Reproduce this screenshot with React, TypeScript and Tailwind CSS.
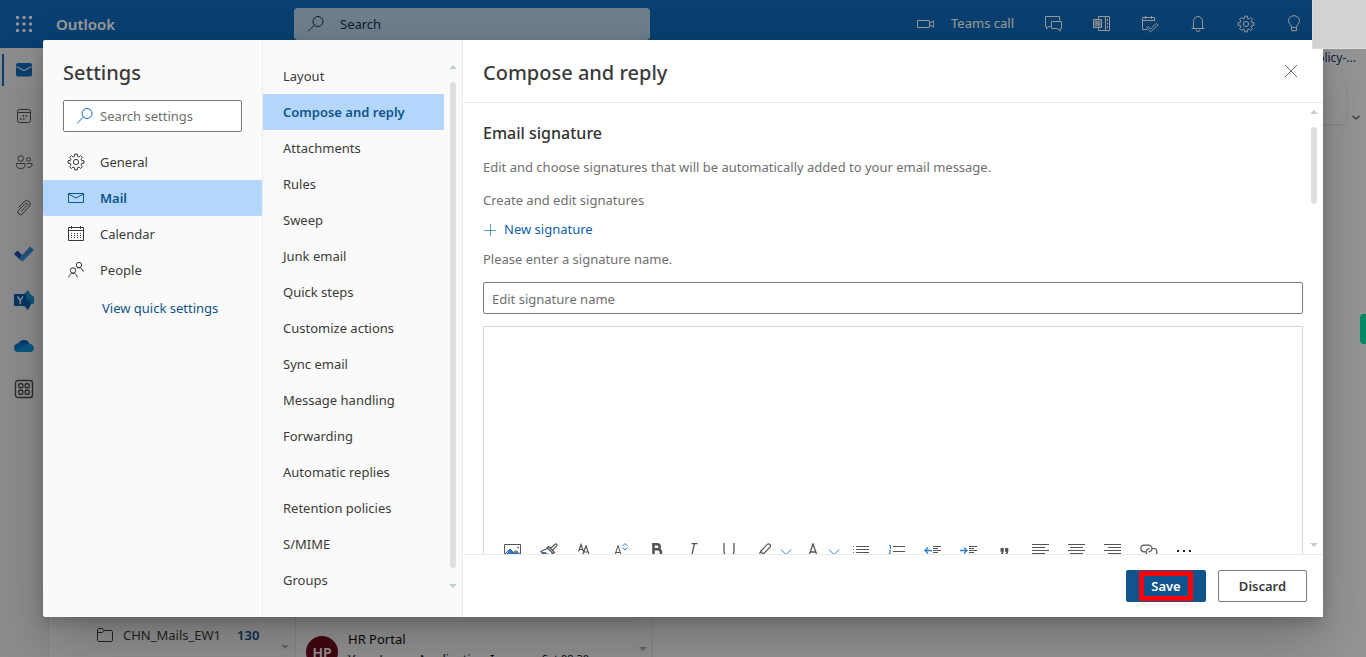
import type { ReactNode } from 'react';

type IconProps = { className?: string };

function Svg({ size = 18, box = 18, className = '', children }: { size?: number; box?: number; className?: string; children: ReactNode }) {
  return (
    <svg
      width={size}
      height={size}
      viewBox={`0 0 ${box} ${box}`}
      fill="none"
      stroke="currentColor"
      strokeWidth="1"
      className={`shrink-0 ${className}`}
      aria-hidden="true"
    >
      {children}
    </svg>
  );
}

const Search = ({ className }: IconProps) => (
  <Svg className={className}>
    <circle cx="11" cy="6.5" r="5" />
    <path d="M7.4 10.1 1.2 16.3" />
  </Svg>
);

const Waffle = () => (
  <Svg>
    <g fill="currentColor" stroke="none">
      {[1, 7.5, 14].map((y) => [1, 7.5, 14].map((x) => <rect key={`${x}-${y}`} x={x} y={y} width="3" height="3" rx="1" />))}
    </g>
  </Svg>
);

const gearPath = (() => {
  const points: string[] = [];
  for (let tooth = 0; tooth < 8; tooth += 1) {
    const steps: [number, number][] = [
      [-13, 5.9],
      [-10, 8],
      [10, 8],
      [13, 5.9],
    ];
    for (const [offset, radius] of steps) {
      const angle = ((tooth * 45 + offset) * Math.PI) / 180;
      points.push(`${(9 + radius * Math.sin(angle)).toFixed(2)} ${(9 - radius * Math.cos(angle)).toFixed(2)}`);
    }
  }
  return `M${points.join('L')}Z`;
})();

const Gear = ({ className }: IconProps) => (
  <Svg className={className}>
    <path strokeLinejoin="round" d={gearPath} />
    <circle cx="9" cy="9" r="2.6" />
  </Svg>
);

const Envelope = () => (
  <Svg>
    <path d="M1.500 4.500h15v9h-15zM1.500 5l7.500 4 7.500-4" />
  </Svg>
);

const CalendarGrid = () => (
  <Svg>
    <path d="M1.500 2.500h15v13h-15zM1.500 5.500h15M4.500 1v3M13.500 1v3" />
    <path strokeDasharray="1 2" d="M4 8.500h11M4 10.500h11M4 12.500h11" />
  </Svg>
);

const People = () => (
  <Svg>
    <circle cx="12" cy="4" r="2.700" />
    <circle cx="6" cy="9.500" r="2.700" />
    <path d="M1.800 16.200c.3-2.400 2-4 4.200-4s3.900 1.600 4.200 4M9.800 7.300c.6-.4 1.300-.6 2.200-.6 2.200 0 3.900 1.600 4.200 4" />
  </Svg>
);

const Video = () => (
  <Svg>
    <path d="M.5 5.500h12v7H.5zM12.500 8l4-2v6l-4-2" />
  </Svg>
);

const Chat = () => (
  <Svg>
    <path d="M5.500 11.500H4l-2.500 2.300v-2.300H.500v-10h14v4M6.500 6.500h10v7h-1.200v2.600l-3-2.600H6.500z" />
  </Svg>
);

const NoteBook = () => (
  <Svg>
    <path d="M5.500 4V1.500h11v14h-11V13M12.500 1.500v14M14.500 4v2M14.500 7.500v2M14.500 11v2" />
    <path fill="currentColor" fillOpacity=".4" d="M.500 4.500h8v8h-8z" />
    <path d="M3 11V6l3 5V6" />
  </Svg>
);

const CalendarCheck = () => (
  <Svg>
    <path d="M6 14.500H1.500v-12h12v3.500M1.500 5.500h12M4.500 1v3M10.500 1v3M7.200 11.500l2.500 2.500 5.600-5.600 1.700 1.700-7.300 6.600-4-3.700z" />
  </Svg>
);

const Bell = () => (
  <Svg>
    <path d="M2.500 13.500h13M4.500 13.500v-7a4.500 5 0 0 1 9 0v7M7 14.500a2 2 0 0 0 4 0" />
  </Svg>
);

const Bulb = () => (
  <Svg>
    <path d="M6.500 12.500c0-2.500-3-3.800-3-6.800a5.500 5 0 0 1 11 0c0 3-3 4.300-3 6.800zM6.500 12.500v3.200h5v-3.200" />
  </Svg>
);

const MailSolid = () => (
  <Svg className="text-[#0f6cbd]">
    <rect x="1" y="2" width="16" height="13.500" rx="2" fill="currentColor" stroke="none" />
    <path stroke="#dcdcdc" strokeWidth="1.200" d="M1.500 5.500 9 9.500l7.500-4" />
  </Svg>
);

const RailCalendar = () => (
  <Svg>
    <rect x="2.500" y="2.500" width="13" height="13" rx="2" />
    <path d="M2.500 5.500h13" />
    <path strokeWidth="1.600" strokeDasharray="1.600 1.400" d="M7.500 9h6M5 12h6" />
  </Svg>
);

const RailPeople = () => (
  <Svg>
    <circle cx="5.800" cy="5.500" r="2.800" />
    <circle cx="13.500" cy="6.500" r="1.900" />
    <path d="M1.500 10.500h8.600v2c0 1.800-1.600 3-4.300 3s-4.300-1.200-4.300-3zM12 10.500h5v1.600c0 1.600-1.500 2.400-4.500 2.200" />
  </Svg>
);

const Clip = () => (
  <Svg>
    <path d="M3.500 8.500 9.300 2.600a3.400 3.400 0 0 1 4.900 4.800L7.500 14.900a2.600 2.600 0 0 1-3.800-3.600l6.300-6.600a1.300 1.300 0 0 1 1.900 1.800L6.500 12" />
  </Svg>
);

const ToDo = () => (
  <Svg size={20} box={20}>
    <g stroke="none">
      <path fill="#1b4ab0" d="M0 10 3.500 6.500l6.200 6.200-3 3.800z" />
      <path fill="#3a8fd4" d="m5 14.500 11-12 4 3.500L8.500 17.500z" />
    </g>
  </Svg>
);

const Yammer = () => (
  <Svg size={20} box={20}>
    <g stroke="none">
      <path fill="#1c92cf" d="M9 5 14 0l3 5 3 1.500v7l-3 .5-3 6-5-5z" />
      <path fill="#0b5da8" d="m10 14 5-5 2 5-3 6z" />
      <rect y="4" width="12.500" height="12" rx="1" fill="#0057a8" />
    </g>
    <path stroke="#e8eef4" strokeWidth="1.500" d="m3.500 6.500 2.700 4 2.700-4M6.200 10.200v4" />
  </Svg>
);

const Cloud = () => (
  <Svg size={20} box={20}>
    <g stroke="none">
      <path fill="#0364b8" d="M4 8.500a6.200 6.200 0 0 1 11.500-1L9 13.500z" />
      <path fill="#0a76cc" d="M4.500 7.300C1.500 7.500 0 9.500 0 11.700 0 14.100 1.900 16 4.300 16L14 9C11 7 8 6.500 4.500 7.300z" />
      <path fill="#1793d6" d="M13 7.800c4-.8 7 1.600 7 4.500 0 2-1.600 3.700-3.700 3.700H4.300c-1.500 0-2.700-.7-3.500-1.800z" />
    </g>
  </Svg>
);

const Apps = () => (
  <Svg size={20} box={20} className="text-[#4a4a4a]">
    <g strokeWidth="1.400">
      <rect x="1.500" y="1.500" width="17" height="17" rx="2.500" />
      <rect x="4.800" y="4.800" width="4" height="4" rx="1" />
      <rect x="11.200" y="4.800" width="4" height="4" rx="1" />
      <rect x="4.800" y="11.200" width="4" height="4" rx="1" />
      <rect x="11.200" y="11.200" width="4" height="4" rx="1" />
    </g>
  </Svg>
);

const Folder = () => (
  <Svg>
    <path d="M1.500 4c0-1 .6-1.500 1.500-1.500h3.500L8 4.500h7c1 0 1.500.6 1.500 1.500v8c0 1-.6 1.500-1.500 1.500H3c-1 0-1.500-.6-1.500-1.500zM1.500 6.500h4.800L8 4.500" />
  </Svg>
);

const Chevron = () => (
  <Svg size={12} box={12} className="text-[#2b7cd3]">
    <path d="m.800 3.500 5.200 5 5.200-5" />
  </Svg>
);

function Rows({ rows, children }: { rows: [number, number, number][]; children?: ReactNode }) {
  return (
    <Svg>
      {rows.map(([x, y, w]) => (
        <rect key={y} x={x} y={y} width={w} height="1" fill="currentColor" stroke="none" />
      ))}
      {children}
    </Svg>
  );
}

const tools: { label: string; icon: ReactNode; menu?: boolean }[] = [
  {
    label: 'Insert picture',
    icon: (
      <Svg>
        <path fill="#2b7cd3" stroke="none" d="M1 13 6 6l4 4 2-2 5 5v2H1z" />
        <path d="M.500 1.500h16v13H.500zM1 11l5-5 6 6M9.500 9.500l2.500-2 4.500 4" />
        <circle cx="14" cy="4.500" r=".5" />
      </Svg>
    ),
  },
  {
    label: 'Format painter',
    icon: (
      <Svg>
        <path fill="#2b7cd3" stroke="none" d="m2 8.500 7 2.500-2 4-5-3z" />
        <path d="M10.800 5.200 15 1.200c1-.9 2.600.6 1.700 1.600l-4 4.200M8.500 3.500l6 6-1.500 1L7 4.800zM7 5.500.800 8.500 8 16l4-5.500M3 10.500l3-1" strokeWidth="1.200" />
      </Svg>
    ),
  },
  {
    label: 'Font',
    icon: (
      <Svg>
        <path d="m2.500 8.500 2.500-7 2.500 7M3.400 6.500h3.200M6.500 12.500l3.500-9.500 3.500 9.500M7.800 9h4.400" strokeWidth="1.200" />
      </Svg>
    ),
  },
  {
    label: 'Font size',
    icon: (
      <Svg>
        <path d="m2.500 13.500 3.500-11 3.500 11M3.800 9.500h4.400" />
        <path stroke="#2b7cd3" d="m10.500 3 2.500-2.500L15.500 3M10.500 4.500 13 7l2.500-2.500" />
      </Svg>
    ),
  },
  {
    label: 'Bold',
    icon: (
      <Svg>
        <path strokeWidth="2.600" d="M5.500 1.300v11.400M4 1.300h5.200a2.500 2.500 0 0 1 0 5H5.500h4.300a3 3 0 0 1 0 6.400H4" />
      </Svg>
    ),
  },
  { label: 'Italic', icon: <Svg><path strokeWidth="1.300" d="M7.500.700h6M5 13.500h5M10.500.700l-3 12.800" /></Svg> },
  { label: 'Underline', icon: <Svg><path strokeWidth="1.300" d="M4 0v8.500a5 5 0 0 0 10 0V0M3 15.500h12" /></Svg> },
  {
    label: 'Highlight',
    menu: true,
    icon: (
      <Svg>
        <path strokeWidth="1.200" d="M4.500 8.500 11.500 1.200c1.500-1 4 .8 2.700 2.800L7.500 11l-4.500 2zM4.500 8.500l3 2.500" />
      </Svg>
    ),
  },
  { label: 'Font color', menu: true, icon: <Svg><path strokeWidth="1.300" d="m5 12.500 4-11.500 4 11.500M6.400 9h5.200" /></Svg> },
  {
    label: 'Bullets',
    icon: (
      <Rows rows={[[4, 3, 13], [4, 6, 13], [4, 9, 13], [4, 12, 13]]}>
        <path stroke="#2b7cd3" d="M1 3.500h1M1 6.500h1M1 9.500h1M1 12.500h1" />
      </Rows>
    ),
  },
  {
    label: 'Numbering',
    icon: (
      <Rows rows={[[5, 3, 12], [5, 8, 12], [5, 13, 12]]}>
        <path stroke="#2b7cd3" d="M1 2.500h1.500V6M1 7.500h1.500L1 11h2" />
      </Rows>
    ),
  },
  {
    label: 'Decrease indent',
    icon: (
      <Rows rows={[[9, 3, 8], [9, 5, 5], [9, 7, 8], [9, 9, 5], [9, 12, 8]]}>
        <path stroke="#2b7cd3" strokeWidth="1.300" d="M8 7.500H1M4 4.500l-3 3 3 3" />
      </Rows>
    ),
  },
  {
    label: 'Increase indent',
    icon: (
      <Rows rows={[[9, 3, 8], [9, 5, 5], [9, 7, 8], [9, 9, 5], [9, 12, 8]]}>
        <path stroke="#2b7cd3" strokeWidth="1.300" d="M0 7.500h7M4 4.500l3 3-3 3" />
      </Rows>
    ),
  },
  {
    label: 'Quote',
    icon: (
      <Svg>
        <path fill="currentColor" stroke="none" d="M4.500 5h3.300v3.500L6.500 12H4.800l.9-3.200H4.500zM9 5h3.300v3.500L11 12H9.300l.9-3.200H9z" />
      </Svg>
    ),
  },
  { label: 'Align left', icon: <Rows rows={[[0, 1, 17], [0, 4, 13], [0, 7, 17], [0, 10, 13]]} /> },
  { label: 'Align center', icon: <Rows rows={[[0, 1, 17], [2, 4, 13], [0, 7, 17], [2, 10, 13]]} /> },
  { label: 'Align right', icon: <Rows rows={[[0, 1, 17], [4, 4, 13], [0, 7, 17], [4, 10, 13]]} /> },
  {
    label: 'Insert link',
    icon: (
      <Svg>
        <path
          d="M5.500 8.800H4.200a3.300 3.300 0 0 1 0-6.600h4.600a3.300 3.300 0 0 1 2 5.800L8.500 9.300M12.500 5.500h1a3.300 3.300 0 0 1 0 6.800H9.200a3.300 3.300 0 0 1-2.400-5.400c.8-1 2-1.300 3-1"
          strokeWidth="1.200"
        />
      </Svg>
    ),
  },
  {
    label: 'More options',
    icon: (
      <Svg className="text-[#222]">
        <path strokeWidth="2" d="M1 8h2M7 8h2M13 8h2" />
      </Svg>
    ),
  },
];

const Triangle = ({ down = false, className = 'text-[#c3ccd1]' }: { down?: boolean; className?: string }) => (
  <svg width="8" height="4" viewBox="0 0 8 4" className={`shrink-0 ${className}`} fill="currentColor" aria-hidden="true">
    <path d={down ? 'M0 0h8L4 4z' : 'M0 4h8L4 0z'} />
  </svg>
);

const sections = [
  { label: 'General', icon: <Gear /> },
  { label: 'Mail', icon: <Envelope />, active: true },
  { label: 'Calendar', icon: <CalendarGrid /> },
  { label: 'People', icon: <People /> },
];

const pages = [
  'Layout',
  'Compose and reply',
  'Attachments',
  'Rules',
  'Sweep',
  'Junk email',
  'Quick steps',
  'Customize actions',
  'Sync email',
  'Message handling',
  'Forwarding',
  'Automatic replies',
  'Retention policies',
  'S/MIME',
  'Groups',
];

const headerActions = [
  { label: 'Chat', icon: <Chat /> },
  { label: 'Notes', icon: <NoteBook /> },
  { label: 'My day', icon: <CalendarCheck /> },
  { label: 'Notifications', icon: <Bell /> },
  { label: 'Settings', icon: <Gear /> },
  { label: 'Tips', icon: <Bulb /> },
];

const railItems = [
  { label: 'Mail', icon: <MailSolid />, active: true },
  { label: 'Calendar', icon: <RailCalendar /> },
  { label: 'People', icon: <RailPeople /> },
  { label: 'Files', icon: <Clip /> },
  { label: 'To Do', icon: <ToDo /> },
  { label: 'Yammer', icon: <Yammer /> },
  { label: 'OneDrive', icon: <Cloud /> },
];

function Header() {
  return (
    <header className="flex h-12 shrink-0 items-center bg-[#0f6cbd] text-white">
      <button aria-label="App launcher" className="flex h-12 w-12 items-center justify-center">
        <Waffle />
      </button>
      <span className="w-[246px] pl-2 text-[15px] font-semibold">Outlook</span>
      <label className="flex h-8 w-[356px] items-center gap-[15px] rounded bg-[#b9d3ea] px-[13px] text-[#15324c]">
        <Search />
        <input aria-label="Search" placeholder="Search" className="w-full bg-transparent pt-px outline-none placeholder:text-[#15324c]" />
      </label>
      <div className="ml-auto flex items-center">
        <button className="flex h-12 items-center gap-4 pr-4">
          <Video />
          Teams call
        </button>
        {headerActions.map((a) => (
          <button key={a.label} aria-label={a.label} className="flex h-12 w-12 items-center justify-center">
            {a.icon}
          </button>
        ))}
        <div className="w-12" />
      </div>
    </header>
  );
}

function Rail() {
  return (
    <nav aria-label="Apps" className="flex w-12 shrink-0 flex-col bg-[#ebebeb] text-[#555]">
      {railItems.map((r) => (
        <a key={r.label} href="#" aria-label={r.label} className="flex h-[46px] items-center pb-[2px]">
          <span className={r.active ? 'ml-[2px] h-8 w-[2px] bg-[#0f6cbd]' : 'ml-[2px] w-[2px]'} />
          <span className="flex w-10 justify-center">{r.icon}</span>
        </a>
      ))}
      <a href="#" aria-label="More apps" className="flex h-10 items-center justify-center pb-[2px]">
        <Apps />
      </a>
    </nav>
  );
}

function MailApp() {
  return (
    <div className="flex h-full flex-col bg-[#f5f5f5]">
      <Header />
      <div className="flex min-h-0 flex-1">
        <Rail />
        <div className="flex w-[248px] shrink-0 items-end border-x border-[#e2e2e2] bg-[#f3f3f3] pb-2">
          <div className="flex w-full items-center pb-1 pl-[47px] text-[#3c3c3c]">
            <Folder />
            <span className="ml-[9px]">CHN_Mails_EW1</span>
            <span className="ml-4 font-semibold text-[#0f548c]">130</span>
          </div>
          <Triangle down className="mr-[6px] text-[#a8b0b3]" />
        </div>
        <div className="flex w-[357px] shrink-0 items-end overflow-hidden border-r border-[#e2e2e2]">
          <div className="flex h-9 flex-1 gap-[10px] border-t border-[#e2e2e2] pl-[10px]">
            <span className="mt-[14px] flex size-8 shrink-0 items-center justify-center rounded-full bg-[#6e0a1e] text-[14px] font-semibold text-white">
              HP
            </span>
            <div className="min-w-0 flex-1 pt-[7px] text-[#111]">
              <p className="leading-5">HR Portal</p>
              <p className="flex leading-5">
                <span className="w-[194px]">Your Leave Application Is</span>
                <span className="text-[11px]">Sat 08:30</span>
              </p>
            </div>
          </div>
          <Triangle down className="mx-[5px] mb-[6px] text-[#a8b0b3]" />
        </div>
        <div className="flex flex-1 flex-col items-end bg-[#f8f8f8]">
          <p className="pr-[10px] text-[12px] leading-5 text-[#123a60]">Leave Policy-...</p>
          <div className="mt-4 flex items-end gap-1 pr-1 text-[#555]">
            <span className="h-10 w-20 rounded bg-[#f9f9f9] shadow" />
            <Svg size={12} box={12}>
              <path strokeWidth="1.200" d="m2.500 4 3.500 3 3.500-3" />
            </Svg>
          </div>
        </div>
      </div>
    </div>
  );
}

function SettingsNav() {
  return (
    <nav aria-label="Settings" className="w-[220px] shrink-0 border-r border-[#ebebeb] pt-[18px]">
      <h1 className="px-5 pt-px text-[20px] leading-7 font-medium">Settings</h1>
      <label className="mx-5 mt-[13px] mb-3 flex h-8 items-center gap-[6px] rounded-xs border border-[#7a7a7a] bg-white px-3 text-[#0f6cbd]">
        <Search />
        <input
          aria-label="Search settings"
          placeholder="Search settings"
          className="w-full min-w-0 bg-transparent pt-px outline-none placeholder:text-[#707070]"
        />
      </label>
      {sections.map((s) => (
        <a
          key={s.label}
          href="#"
          className={
            s.active
              ? 'flex h-9 items-center gap-[15px] rounded-xs bg-[#b4d6fa] pl-6 font-semibold text-[#0f548c]'
              : 'flex h-9 items-center gap-[15px] pl-6'
          }
        >
          {s.icon}
          <span className="pt-[2px]">{s.label}</span>
        </a>
      ))}
      <a href="#" className="flex h-10 items-center pt-[2px] pl-[59px] text-[#0f548c]">
        View quick settings
      </a>
    </nav>
  );
}

function PageNav() {
  return (
    <div className="flex w-[200px] shrink-0 border-r border-[#ebebeb]">
      <nav aria-label="Mail settings" className="flex-1 pt-[18px]">
        {pages.map((p) => (
          <a
            key={p}
            href="#"
            className={
              p === 'Compose and reply'
                ? 'flex h-9 items-center bg-[#b4d6fa] pt-[2px] pl-5 font-semibold text-[#0f548c]'
                : 'flex h-9 items-center pt-[2px] pl-5'
            }
          >
            {p}
          </a>
        ))}
      </nav>
      <div className="flex w-[18px] flex-col items-center pt-[25px] pb-[29px]">
        <Triangle />
        <span className="mt-[13px] mb-4 w-[6px] flex-1 rounded-full bg-[#dfdfdf]" />
        <Triangle down />
      </div>
    </div>
  );
}

function ComposePanel() {
  return (
    <section className="flex min-w-0 flex-1 flex-col bg-white">
      <div className="flex h-[63px] shrink-0 items-center justify-between border-b border-[#ebebeb] pr-[25px] pl-5">
        <h2 className="pt-1 text-[20px] font-medium">Compose and reply</h2>
        <button aria-label="Close" className="text-[#666]">
          <Svg size={14} box={14}>
            <path d="m1 1 12 12M13 1 1 13" />
          </Svg>
        </button>
      </div>
      <div className="flex min-h-0 flex-1">
        <div className="min-w-0 flex-1 overflow-hidden pt-5 pl-5 text-[#707070]">
          <h3 className="text-[16px] leading-5 font-medium text-[#333]">Email signature</h3>
          <p className="mt-[14px] leading-5">Edit and choose signatures that will be automatically added to your email message.</p>
          <p className="mt-[13px] leading-5">Create and edit signatures</p>
          <button className="mt-[10px] flex h-5 items-center gap-[7px] text-[#0f5fb0]">
            <Svg size={14} box={14} className="text-[#5d9bc7]">
              <path d="M1 7.500h12M7.500 1v12" />
            </Svg>
            New signature
          </button>
          <label htmlFor="signature-name" className="mt-[9px] block leading-5">
            Please enter a signature name.
          </label>
          <input
            id="signature-name"
            placeholder="Edit signature name"
            className="mt-[13px] h-8 w-full rounded-xs border border-[#7a7a7a] px-2 pt-[2px] outline-none placeholder:text-[#707070]"
          />
          <div className="mt-3 border border-[#d6d6d6]">
            <textarea aria-label="Signature" className="block h-[207px] w-full resize-none outline-none" />
            <div className="flex h-9 items-center pl-[11px] text-[#555]">
              {tools.map((t) => (
                <button
                  key={t.label}
                  aria-label={t.label}
                  className={t.menu ? 'flex w-12 items-center gap-[6px] pl-[9px]' : 'flex w-9 justify-center'}
                >
                  {t.icon}
                  {t.menu && <Chevron />}
                </button>
              ))}
            </div>
          </div>
        </div>
        <div className="flex w-5 flex-col items-center py-[7px] pl-px">
          <Triangle />
          <span className="mt-[13px] h-[77px] w-[6px] rounded-full bg-[#dfdfdf]" />
          <span className="flex-1" />
          <Triangle down />
        </div>
      </div>
      <footer className="flex h-[63px] shrink-0 items-center justify-end gap-3 border-t border-[#ebebeb] pr-4">
        <button className="relative flex h-8 w-20 items-center justify-center rounded-xs bg-[#0f548c] pt-[2px] font-semibold text-white">
          Save
          <span className="absolute inset-x-[13px] inset-y-px border-[5px] border-[#ff0000]" />
        </button>
        <button className="h-8 w-[89px] rounded-xs border border-[#7a7a7a] pt-px font-semibold">Discard</button>
      </footer>
    </section>
  );
}

export default function App() {
  return (
    <div className="relative h-screen overflow-hidden font-['Noto_Sans','Open_Sans',sans-serif] text-[13px] text-[#3b3b3b]">
      <MailApp />
      <div className="absolute inset-0 flex bg-black/40 px-[43px] py-10">
        <div
          role="dialog"
          aria-label="Settings"
          className="flex flex-1 rounded-xs bg-[#fafafa] shadow-[0_26px_58px_rgba(0,0,0,0.22),0_5px_14px_rgba(0,0,0,0.18)]"
        >
          <SettingsNav />
          <PageNav />
          <ComposePanel />
        </div>
      </div>
      <div className="absolute top-0 right-0 h-[49px] w-[54px] border-b border-l border-[#dedede] bg-[#d2d2d2]" />
      <div className="absolute top-[314px] right-0 h-[30px] w-[6px] rounded-l bg-[#008a63]" />
    </div>
  );
}
